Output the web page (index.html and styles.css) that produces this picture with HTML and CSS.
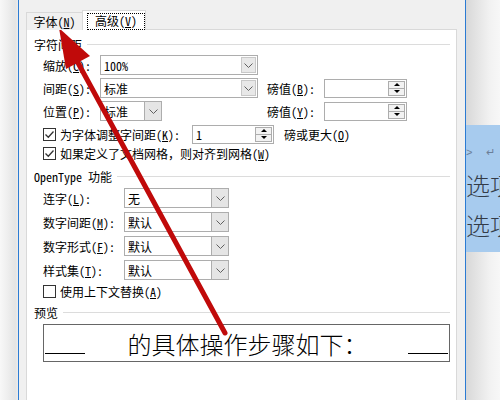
FILE: index.html
```html
<!DOCTYPE html>
<html lang="zh-CN">
<head>
<meta charset="utf-8">
<link rel="stylesheet" href="styles.css">
</head>
<body>
<div class="screen">
  <div class="bg-left"></div>
  <div class="win">
    <div class="tabs">
      <div class="tab">字体(<u>N</u>)</div>
      <div class="tab active"><span class="focus">高级(<u>V</u>)</span></div>
    </div>
    <div class="panel">
      <div class="group-title"><span>字符间距</span></div>
      <div class="grid">
        <span class="lbl">缩放(<u>C</u>):</span>
        <div class="combo edit w158"><span class="val">100%</span><span class="btn"><svg width="9" height="5" viewBox="0 0 9 5"><path d="M0.5 0.5 L4.5 4.5 L8.5 0.5" fill="none" stroke="#606060" stroke-width="1"/></svg></span></div>
        <span></span><span></span>

        <span class="lbl">间距(<u>S</u>):</span>
        <div class="combo edit w158"><span class="val">标准</span><span class="btn"><svg width="9" height="5" viewBox="0 0 9 5"><path d="M0.5 0.5 L4.5 4.5 L8.5 0.5" fill="none" stroke="#606060" stroke-width="1"/></svg></span></div>
        <span class="lbl">磅值(<u>B</u>):</span>
        <div class="spin w83"><span class="val"></span><span class="spin-btns"><span class="up"></span><span class="down"></span></span></div>

        <span class="lbl">位置(<u>P</u>):</span>
        <div class="combo w62"><span class="val">标准</span><span class="btn"><svg width="9" height="5" viewBox="0 0 9 5"><path d="M0.5 0.5 L4.5 4.5 L8.5 0.5" fill="none" stroke="#606060" stroke-width="1"/></svg></span></div>
        <span class="lbl">磅值(<u>Y</u>):</span>
        <div class="spin w83"><span class="val"></span><span class="spin-btns"><span class="up"></span><span class="down"></span></span></div>
      </div>

      <div class="row check-row">
        <span class="cb"><svg width="11" height="11" viewBox="0 0 11 11"><path d="M1.5 5.5 L4.3 8.3 L9.5 2.5" fill="none" stroke="#333" stroke-width="1.3"/></svg></span>
        <span class="cb-text">为字体调整字间距(<u>K</u>):</span>
        <div class="spin w82 kern"><span class="val">1</span><span class="spin-btns"><span class="up"></span><span class="down"></span></span></div>
        <span class="after">磅或更大(<u>O</u>)</span>
      </div>
      <div class="row check-row short">
        <span class="cb"><svg width="11" height="11" viewBox="0 0 11 11"><path d="M1.5 5.5 L4.3 8.3 L9.5 2.5" fill="none" stroke="#333" stroke-width="1.3"/></svg></span>
        <span class="cb-text">如果定义了文档网格，则对齐到网格(<u>W</u>)</span>
      </div>

      <div class="group-title ot"><span>OpenType 功能</span></div>
      <div class="ot-list">
        <div class="row"><span class="lbl2">连字(<u>L</u>):</span><div class="combo w105"><span class="val">无</span><span class="btn"><svg width="9" height="5" viewBox="0 0 9 5"><path d="M0.5 0.5 L4.5 4.5 L8.5 0.5" fill="none" stroke="#606060" stroke-width="1"/></svg></span></div></div>
        <div class="row"><span class="lbl2">数字间距(<u>M</u>):</span><div class="combo w105"><span class="val">默认</span><span class="btn"><svg width="9" height="5" viewBox="0 0 9 5"><path d="M0.5 0.5 L4.5 4.5 L8.5 0.5" fill="none" stroke="#606060" stroke-width="1"/></svg></span></div></div>
        <div class="row"><span class="lbl2">数字形式(<u>F</u>):</span><div class="combo w105"><span class="val">默认</span><span class="btn"><svg width="9" height="5" viewBox="0 0 9 5"><path d="M0.5 0.5 L4.5 4.5 L8.5 0.5" fill="none" stroke="#606060" stroke-width="1"/></svg></span></div></div>
        <div class="row"><span class="lbl2">样式集(<u>T</u>):</span><div class="combo w105"><span class="val">默认</span><span class="btn"><svg width="9" height="5" viewBox="0 0 9 5"><path d="M0.5 0.5 L4.5 4.5 L8.5 0.5" fill="none" stroke="#606060" stroke-width="1"/></svg></span></div></div>
      </div>
      <div class="row check-row short ctx">
        <span class="cb"></span>
        <span class="cb-text">使用上下文替换(<u>A</u>)</span>
      </div>

      <div class="group-title pv"><span>预览</span></div>
      <div class="preview">
        <span class="uline"></span>
        <span class="pv-text">的具体操作步骤如下：</span>
        <span class="uline"></span>
      </div>
    </div>
  </div>
  <div class="bg-right">
    <div class="sel">
      <div class="marks"><span>˃</span><span class="ret">↵</span></div>
      <div class="doc-line">选项</div>
      <div class="doc-line">选项</div>
    </div>
  </div>
  <svg class="arrow" width="500" height="400" viewBox="0 0 500 400">
    <line x1="77" y1="61" x2="225" y2="333" stroke="#c00a0a" stroke-width="5" stroke-linecap="round"/>
    <polygon points="59,28 90,56 66,69" fill="#c00a0a"/>
  </svg>
</div>
</body>
</html>
```
FILE: styles.css
```css
* { box-sizing: border-box; }
html, body { margin: 0; padding: 0; }
body {
  width: 500px;
  height: 400px;
  overflow: hidden;
  font-family: "Noto Sans Mono CJK SC", "Noto Sans CJK SC", sans-serif;
  font-size: 12px;
  color: #000;
}
u { text-decoration: underline; text-underline-offset: 1px; }

.screen {
  position: relative;
  display: flex;
  width: 500px;
  height: 400px;
  overflow: hidden;
}
.bg-left {
  width: 18px;
  flex: none;
  background: linear-gradient(to right, #f8f8f8, #e4e4e4 85%, #ececec);
}
.win {
  width: 448px;
  flex: none;
  background: #f0f0f0;
  border-left: 1px solid #2b7bd3;
  border-right: 1px solid #2b7bd3;
  padding: 10px 8px 0 7px;
  display: flex;
  flex-direction: column;
}
.bg-right {
  flex: 1;
  background: linear-gradient(to right, #d8d8d8, #f2f2f2 50%, #ffffff);
  padding-top: 125px;
}

/* tabs */
.tabs {
  display: flex;
  align-items: flex-end;
  height: 20px;
  margin-bottom: -1px;
  position: relative;
  z-index: 1;
}
.tab {
  height: 18px;
  width: 57px;
  border: 1px solid #d9d9d9;
  border-bottom: none;
  background: #f0f0f0;
  display: flex;
  align-items: center;
  justify-content: center;
  line-height: 1;
}
.tab.active {
  height: 20px;
  width: 64px;
  margin-left: -1px;
  background: #fff;
  padding-top: 1px;
}
.focus {
  display: flex;
  align-items: center;
  justify-content: center;
  width: 56px;
  height: 15px;
  margin-left: 4px;
  outline: 1px dotted #000;
}

/* panel */
.panel {
  flex: 1;
  background: #fff;
  border: 1px solid #d9d9d9;
  border-bottom: none;
  padding: 6px 6px 0 7px;
  display: flex;
  flex-direction: column;
}
.group-title {
  display: flex;
  align-items: center;
  height: 16px;
  gap: 5px;
}
.group-title::after {
  content: "";
  flex: 1;
  height: 1px;
  background: #dcdcdc;
}
.group-title.ot { margin-top: 6px; }
.group-title.pv { margin-top: 4px; }

.grid {
  display: grid;
  grid-template-columns: 57px 167px 57px 83px;
  grid-auto-rows: 20px;
  row-gap: 3px;
  margin-top: 3px;
  padding-left: 9px;
  align-items: center;
}
.lbl { white-space: nowrap; }

.row {
  display: flex;
  align-items: center;
  height: 20px;
  padding-left: 9px;
}
.check-row { margin-top: 3px; }
.check-row.short { height: 18px; margin-top: 0; }
.check-row.ctx { margin-top: 2px; }

.ot-list {
  display: flex;
  flex-direction: column;
  gap: 4px;
  margin-top: 4px;
}
.lbl2 { width: 81px; white-space: nowrap; }

/* combos */
.combo {
  display: flex;
  height: 20px;
  border: 1px solid #adadad;
  background: #fff;
}
.combo .val {
  flex: 1;
  padding-left: 3px;
  display: flex;
  align-items: center;
}
.combo .btn {
  width: 17px;
  background: #e5e5e5;
  border-left: 1px solid #adadad;
  display: flex;
  align-items: center;
  justify-content: center;
}
.combo.edit .btn {
  width: 15px;
  margin: 1px;
  border: 1px solid #c8c8c8;
  background: #e8e8e8;
}
.w158 { width: 158px; }
.w62 { width: 62px; }
.w105 { width: 105px; }
.w83 { width: 83px; }
.w82 { width: 82px; }

/* spin */
.spin {
  display: flex;
  height: 19px;
  border: 1px solid #adadad;
  background: #fff;
}
.spin .val {
  flex: 1;
  padding-left: 3px;
  display: flex;
  align-items: center;
}
.spin-btns {
  width: 17px;
  margin: 1px;
  border: 1px solid #adadad;
  background: #f2f2f2;
  display: flex;
  flex-direction: column;
}
.spin-btns span {
  flex: 1;
  display: flex;
  align-items: center;
  justify-content: center;
}
.spin-btns .up { border-bottom: 1px solid #adadad; }
.spin-btns .up::before {
  content: "";
  border-left: 3px solid transparent;
  border-right: 3px solid transparent;
  border-bottom: 3px solid #000;
}
.spin-btns .down::before {
  content: "";
  border-left: 3px solid transparent;
  border-right: 3px solid transparent;
  border-top: 3px solid #000;
}
.kern { margin-left: 12px; }
.after { margin-left: 10px; }

/* checkbox */
.cb {
  width: 13px;
  height: 13px;
  border: 1px solid #333;
  background: #fff;
  display: flex;
  align-items: center;
  justify-content: center;
  flex: none;
}
.cb-text { margin-left: 4px; white-space: nowrap; }

/* preview */
.preview {
  margin: 4px 0 0 9px;
  height: 38px;
  border: 1px solid #666;
  display: flex;
  align-items: center;
  padding: 0 1px;
}
.uline {
  width: 40px;
  height: 1px;
  background: #000;
  align-self: flex-end;
  margin-bottom: 7px;
}
.pv-text {
  flex: 1;
  text-align: center;
  font-family: "Noto Sans CJK SC", sans-serif;
  font-weight: 300;
  font-size: 24px;
  line-height: 1;
  padding-left: 2px;
  padding-top: 2px;
}

/* right side document */
.sel {
  height: 127px;
  background: #a7cbee;
  color: #333b47;
  overflow: hidden;
}
.marks {
  height: 40px;
  display: flex;
  align-items: flex-end;
  gap: 14px;
  padding-bottom: 6px;
  font-size: 11px;
  color: #6b7f98;
}
.doc-line {
  font-family: "Noto Sans CJK SC", sans-serif;
  font-weight: 300;
  font-size: 24px;
  line-height: 40px;
  white-space: nowrap;
}

.arrow {
  position: absolute;
  left: 0;
  top: 0;
  pointer-events: none;
}
```
